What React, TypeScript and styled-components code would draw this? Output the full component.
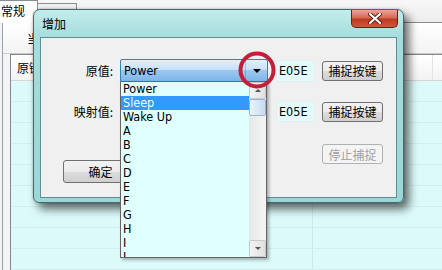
import React from "react";
import styled, { createGlobalStyle, css } from "styled-components";

const GlobalStyle = createGlobalStyle`
  html, body {
    margin: 0;
    padding: 0;
    background: #ffffff;
  }
  body {
    width: 442px;
    height: 270px;
    overflow: hidden;
    font-family: "Noto Sans CJK SC", "DejaVu Sans", sans-serif;
    font-size: 12px;
    color: #000;
  }
`;

const latin = css`
  font-family: "DejaVu Sans Condensed", "DejaVu Sans", sans-serif;
  font-stretch: condensed;
  font-size: 12.5px;
`;

const Desktop = styled.div`
  position: relative;
  width: 442px;
  height: 270px;
  overflow: hidden;
  display: flex;
  flex-direction: column;
  background: #f4f4f4;
`;

/* ---------- window in the back ---------- */

const TabStrip = styled.div`
  height: 22px;
  display: flex;
  align-items: flex-end;
  border-bottom: 1px solid #898c95;
  background: linear-gradient(#f7f7f7, #ededed);
`;

const Tab = styled.div<{ active?: boolean }>`
  box-sizing: border-box;
  border: 1px solid #898c95;
  border-bottom: none;
  border-left: none;
  padding: 2px 0 0 1px;
  line-height: 15px;
  ${(p) =>
    p.active
      ? css`
          width: 38px;
          height: 23px;
          margin-bottom: -1px;
          background: #ffffff;
        `
      : css`
          width: 39px;
          height: 19px;
          background: linear-gradient(#f2f2f2, #dcdcdc);
        `}
`;

const TabPanel = styled.div`
  flex: 1;
  display: flex;
  flex-direction: column;
  margin-left: 2px;
  border-left: 1px solid #9aa0a6;
  background: linear-gradient(#ffffff, #f4f4f4 30px);
`;

const PanelHeader = styled.div`
  height: 31px;
  box-sizing: border-box;
  padding: 9px 0 0 24px;
  line-height: 14px;
  border-bottom: 1px solid #c9c9c9;
`;

const ListView = styled.div`
  flex: 1;
  display: flex;
  flex-direction: column;
  margin-left: 7px;
  border: 1px solid #828790;
  border-right: none;
  background: #dcfafa;
`;

const ListHeader = styled.div`
  height: 25px;
  display: flex;
  align-items: center;
  background: linear-gradient(#ffffff, #f3f3f3);
  border-bottom: 1px solid #d5d5d5;
`;

const HeaderCell = styled.div<{ width: number }>`
  width: ${(p) => p.width}px;
  padding-left: 6px;
  box-sizing: border-box;
  border-right: 1px solid #e3e3e3;
  height: 100%;
  display: flex;
  align-items: center;
`;

const ListBody = styled.div`
  flex: 1;
  overflow: hidden;
`;

const ListRow = styled.div`
  height: 20px;
  border-bottom: 1px solid #d2efef;
  background: linear-gradient(to right, transparent 301px, #cbe9e9 301px, #cbe9e9 302px, transparent 302px);
`;

const HScroll = styled.div`
  height: 15px;
  display: flex;
  align-items: stretch;
  background: #e8e8e8;
  border-top: 1px solid #dcdcdc;
`;

const ScrollArrow = styled.div<{ width: number }>`
  width: ${(p) => p.width}px;
  display: flex;
  align-items: center;
  justify-content: center;
`;

const HThumb = styled.div`
  width: 373px;
  margin: 1px 0 1px 3px;
  border: 1px solid #9a9a9a;
  border-radius: 2px;
  box-sizing: border-box;
  background: linear-gradient(#f6f6f6, #e2e2e2 50%, #d6d6d6 51%, #dedede);
`;

const BottomBar = styled.div`
  height: 6px;
  border-top: 1px solid #a0a0a0;
  background: #f0f0f0;
`;

/* ---------- dialog ---------- */

const Dialog = styled.div`
  position: absolute;
  left: 33px;
  top: 9px;
  width: 371px;
  height: 194px;
  box-sizing: border-box;
  border: 1px solid #3d6d70;
  border-radius: 7px 7px 6px 6px;
  background: linear-gradient(#c3ecec, #a5dcdc 28px, #9dd6d6);
  box-shadow: 5px 6px 10px rgba(0, 0, 0, 0.6), 0 0 2px rgba(0, 0, 0, 0.3);
  display: flex;
  flex-direction: column;
  padding: 0 6px 4px 6px;
`;

const TitleBar = styled.div`
  height: 27px;
  display: flex;
  justify-content: space-between;
  align-items: flex-start;
`;

const Title = styled.div`
  margin: 7px 0 0 2px;
  line-height: 14px;
`;

const CloseButton = styled.div`
  width: 47px;
  height: 18px;
  margin-right: -1px;
  box-sizing: border-box;
  border: 1px solid #6b1d14;
  border-top: none;
  border-radius: 0 0 5px 5px;
  background: linear-gradient(#e8a898, #d46a52 45%, #bf3a22 55%, #d0563c);
  display: flex;
  align-items: center;
  justify-content: center;
`;

const Client = styled.div`
  flex: 1;
  background: #f0f0f0;
  border: 1px solid #5f8e90;
  display: flex;
  flex-direction: column;
  padding-top: 21px;
`;

const FormRow = styled.div<{ top: number; height: number }>`
  display: flex;
  align-items: center;
  margin-top: ${(p) => p.top}px;
  height: ${(p) => p.height}px;
`;

const Label = styled.div`
  width: 72px;
  margin-right: 7px;
  text-align: right;
`;

const Combo = styled.div`
  width: 148px;
  height: 23px;
  box-sizing: border-box;
  border: 1px solid #3c7fb1;
  border-radius: 2px;
  background: linear-gradient(#e3f0fc 0%, #c6e0f7 45%, #9cc8f0 50%, #7fb5ea 100%);
  display: flex;
  align-items: center;
`;

const ComboText = styled.div`
  ${latin};
  flex: 1;
  padding-left: 3px;
`;

const ComboArrow = styled.div`
  width: 21px;
  height: 100%;
  display: flex;
  align-items: center;
  justify-content: center;
  border-left: 1px solid rgba(60, 127, 177, 0.35);
`;

const Field = styled.div<{ height: number }>`
  ${latin};
  width: 39px;
  height: ${(p) => p.height}px;
  margin-left: 8px;
  box-sizing: border-box;
  padding-left: 2px;
  background: #e2fafa;
  border: 1px solid #e6eeee;
  display: flex;
  align-items: center;
`;

const Button = styled.div<{ width: number; height: number; disabled?: boolean }>`
  width: ${(p) => p.width}px;
  height: ${(p) => p.height}px;
  box-sizing: border-box;
  border: 1px solid ${(p) => (p.disabled ? "#adb2b5" : "#707070")};
  border-radius: 3px;
  background: ${(p) =>
    p.disabled
      ? "#f4f4f4"
      : "linear-gradient(#f2f2f2, #ebebeb 50%, #dddddd 51%, #cfcfcf)"};
  color: ${(p) => (p.disabled ? "#a0a0a0" : "#000")};
  display: flex;
  align-items: center;
  justify-content: center;
`;

const ActionRow = styled.div`
  display: flex;
  align-items: flex-start;
  margin-top: 22px;
`;

/* ---------- open dropdown ---------- */

const DropList = styled.div`
  position: absolute;
  left: 120px;
  top: 81px;
  width: 147px;
  height: 177px;
  box-sizing: border-box;
  border: 1px solid #646464;
  background: #e0ffff;
  box-shadow: 2px 2px 3px rgba(0, 0, 0, 0.3);
  display: flex;
`;

const Items = styled.div`
  flex: 1;
  overflow: hidden;
`;

const Item = styled.div<{ selected?: boolean }>`
  ${latin};
  height: 14px;
  line-height: 14px;
  padding-left: 2px;
  background: ${(p) => (p.selected ? "#3399ff" : "transparent")};
  color: ${(p) => (p.selected ? "#eaffff" : "#000")};
`;

const VScroll = styled.div`
  width: 17px;
  display: flex;
  flex-direction: column;
  background: linear-gradient(to right, #e6e8e8, #f4f4f4);
`;

const VScrollButton = styled.div`
  height: 17px;
  display: flex;
  align-items: center;
  justify-content: center;
  box-sizing: border-box;
  border: 1px solid #c6c9cc;
  border-radius: 2px;
  background: linear-gradient(to right, #f4f4f4, #e0e0e0);
`;

const VThumb = styled.div`
  height: 17px;
  box-sizing: border-box;
  border: 1px solid #9cb6d4;
  border-radius: 2px;
  background: linear-gradient(to right, #eaf4fc, #c6dcf2);
`;

const Spacer = styled.div`
  flex: 1;
`;

const Marker = styled.svg`
  position: absolute;
  left: 238px;
  top: 51px;
`;

const Triangle = ({ dir, size = 4, color = "#000" }: { dir: "up" | "down" | "left" | "right"; size?: number; color?: string }) => {
  const s = size;
  const pts = {
    down: `0,0 ${2 * s},0 ${s},${s}`,
    up: `0,${s} ${2 * s},${s} ${s},0`,
    left: `${s},0 ${s},${2 * s} 0,${s}`,
    right: `0,0 0,${2 * s} ${s},${s}`,
  }[dir];
  const w = dir === "up" || dir === "down" ? 2 * s : s;
  const h = dir === "up" || dir === "down" ? s : 2 * s;
  return (
    <svg width={w} height={h} viewBox={`0 0 ${w} ${h}`}>
      <polygon points={pts} fill={color} />
    </svg>
  );
};

const items = ["Power", "Sleep", "Wake Up", "A", "B", "C", "D", "E", "F", "G", "H", "I", "J"];

export default function App() {
  return (
    <>
      <GlobalStyle />
      <Desktop>
        <TabStrip>
          <Tab active>常规</Tab>
          <Tab />
        </TabStrip>
        <TabPanel>
          <PanelHeader>当前键盘映射</PanelHeader>
          <ListView>
            <ListHeader>
              <HeaderCell width={302}>原键值</HeaderCell>
              <HeaderCell width={120} />
            </ListHeader>
            <ListBody>
              {Array.from({ length: 9 }).map((_, i) => (
                <ListRow key={i} />
              ))}
            </ListBody>
            <HScroll>
              <ScrollArrow width={17}>
                <Triangle dir="left" size={4} color="#4a4a4a" />
              </ScrollArrow>
              <HThumb />
              <Spacer />
              <ScrollArrow width={14}>
                <Triangle dir="right" size={4} color="#4a4a4a" />
              </ScrollArrow>
            </HScroll>
          </ListView>
          <BottomBar />
        </TabPanel>

        <Dialog>
          <TitleBar>
            <Title>增加</Title>
            <CloseButton>
              <svg width="14" height="11" viewBox="0 0 14 11">
                <path d="M2 1 L12 10 M12 1 L2 10" stroke="#5a1a10" strokeWidth="4" strokeLinecap="round" />
                <path d="M2 1 L12 10 M12 1 L2 10" stroke="#ffffff" strokeWidth="2.2" strokeLinecap="round" />
              </svg>
            </CloseButton>
          </TitleBar>
          <Client>
            <FormRow top={0} height={23}>
              <Label>原值:</Label>
              <Combo>
                <ComboText>Power</ComboText>
                <ComboArrow>
                  <Triangle dir="down" size={4} />
                </ComboArrow>
              </Combo>
              <Field height={22}>E05E</Field>
              <Button width={61} height={20} style={{ marginLeft: 7 }}>
                捕捉按键
              </Button>
            </FormRow>
            <FormRow top={19} height={21}>
              <Label>映射值:</Label>
              <div style={{ width: 148 }} />
              <Field height={21}>E05E</Field>
              <Button width={61} height={20} style={{ marginLeft: 7 }}>
                捕捉按键
              </Button>
            </FormRow>
            <ActionRow>
              <Button width={75} height={23} style={{ marginLeft: 22, marginTop: 16 }}>
                确定
              </Button>
              <Button width={61} height={20} disabled style={{ marginLeft: 184 }}>
                停止捕捉
              </Button>
            </ActionRow>
          </Client>
        </Dialog>

        <DropList>
          <Items>
            {items.map((it) => (
              <Item key={it} selected={it === "Sleep"}>
                {it}
              </Item>
            ))}
          </Items>
          <VScroll>
            <VScrollButton>
              <Triangle dir="up" size={3} color="#555" />
            </VScrollButton>
            <VThumb />
            <Spacer />
            <VScrollButton>
              <Triangle dir="down" size={3} color="#555" />
            </VScrollButton>
          </VScroll>
        </DropList>

        <Marker width="38" height="38" viewBox="0 0 38 38">
          <circle cx="19" cy="19" r="16.5" fill="none" stroke="#c21f3a" strokeWidth="4" />
        </Marker>
      </Desktop>
    </>
  );
}
